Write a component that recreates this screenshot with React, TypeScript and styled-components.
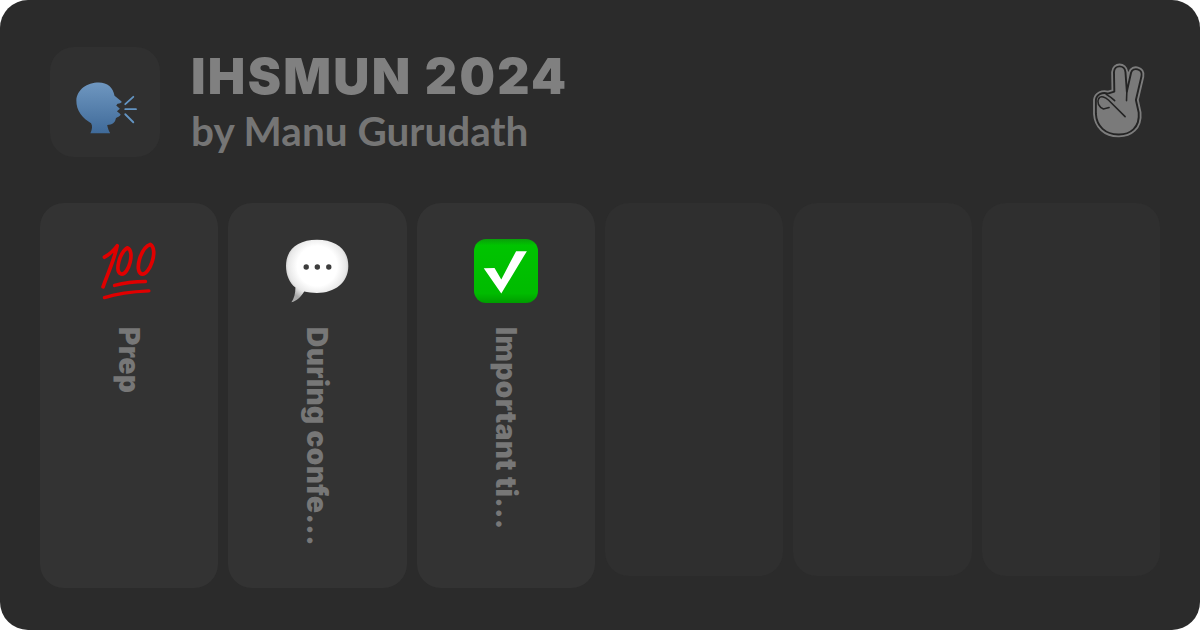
import { ReactNode } from 'react'
import styled, { createGlobalStyle } from 'styled-components'

const GlobalStyle = createGlobalStyle`
  html, body {
    margin: 0;
    padding: 0;
    background: #fff;
  }
`

const SpeakingHead = () => (
  <HeadSvg viewBox="95 115 200 200">
    <defs>
      <linearGradient id="head" x1="0" y1="0" x2="0" y2="1">
        <stop offset="0" stopColor="#6f97c0" />
        <stop offset="1" stopColor="#3f6a99" />
      </linearGradient>
    </defs>
    <path
      d="M150 307 C155 295 157 285 152 277 C128 262 107 240 108 208 C110 176 140 155 175 155 C201 155 218 170 222 195 L243 212 C244 216 238 218 231 219 L227 224 L238 234 L229 241 L240 250 C240 256 231 258 226 262 C224 276 215 281 200 282 C202 291 204 299 209 307 Z"
      fill="url(#head)"
    />
    <g stroke="#6394c2" strokeWidth="5.5" strokeLinecap="round">
      <line x1="254" y1="220" x2="278" y2="198" />
      <line x1="254" y1="235" x2="286" y2="235" />
      <line x1="254" y1="250" x2="278" y2="274" />
    </g>
  </HeadSvg>
)

const handOutline =
  'M135 122 L134 66 C135 44 165 44 167 66 L171 122 L183 68 C188 50 218 56 213 78 L197 146 L205 182 C209 226 180 246 146 245 C110 245 84 222 82 186 L82 146 C84 130 102 122 116 128 Z'

const PeaceHand = () => (
  <PeaceSvg viewBox="68 35 158 228">
    <path d={handOutline} fill="#2b2b2b" stroke="#7d7d7d" strokeWidth="16" strokeLinejoin="round" />
    <path d={handOutline} fill="#7a7a7a" stroke="#242424" strokeWidth="5.5" strokeLinejoin="round" />
    <g fill="none" stroke="#242424" strokeWidth="4.5" strokeLinecap="round">
      <path d="M171 122 L170 148" />
      <path d="M112 130 C122 136 132 144 136 148" />
      <path d="M90 142 C96 132 110 138 118 146 L166 194" />
      <path d="M90 142 C84 152 90 166 104 172 L120 168" />
    </g>
  </PeaceSvg>
)

const Hundred = () => (
  <EmojiSvg viewBox="40 30 190 190">
    <g fill="none" stroke="#e00000" strokeLinecap="round" strokeLinejoin="round">
      <path d="M62 84 C76 76 90 64 100 50 C92 90 72 132 58 172" strokeWidth="11" />
      <path d="M130 56 C106 72 92 128 112 134 C134 138 154 64 130 56 Z" strokeWidth="11" />
      <path d="M198 46 C170 56 150 124 172 134 C196 140 224 60 198 46 Z" strokeWidth="11" />
      <path d="M92 168 C120 160 155 156 184 156" strokeWidth="10" />
      <path d="M62 204 C100 192 150 186 194 184" strokeWidth="10" />
    </g>
  </EmojiSvg>
)

const SpeechBubble = () => (
  <EmojiSvg viewBox="45 28 190 190">
    <defs>
      <radialGradient id="bubble" cx="0.5" cy="0.42" r="0.58">
        <stop offset="0.55" stopColor="#ffffff" />
        <stop offset="0.8" stopColor="#e8e8e8" />
        <stop offset="1" stopColor="#a8a8a8" />
      </radialGradient>
    </defs>
    <path
      d="M140 30 C196 30 233 58 233 108 C233 158 192 188 140 188 C126 188 112 186 102 184 C92 200 80 212 64 216 C72 204 76 190 76 172 C58 158 48 134 48 108 C48 58 84 30 140 30 Z"
      fill="url(#bubble)"
    />
    <circle cx="108" cy="111" r="8" fill="#3d3d3d" />
    <circle cx="141" cy="111" r="8" fill="#3d3d3d" />
    <circle cx="175" cy="111" r="8" fill="#3d3d3d" />
  </EmojiSvg>
)

const CheckBox = () => (
  <EmojiSvg viewBox="43 28 190 190">
    <defs>
      <linearGradient id="check" x1="0" y1="0" x2="0" y2="1">
        <stop offset="0" stopColor="#0a9f0a" />
        <stop offset="0.1" stopColor="#00c400" />
        <stop offset="0.85" stopColor="#00bb00" />
        <stop offset="1" stopColor="#009c00" />
      </linearGradient>
    </defs>
    <rect x="43" y="28" width="190" height="190" rx="36" fill="url(#check)" />
    <polygon points="72,115 104,114 124,148 168,64 200,64 124,190" fill="#fff" />
  </EmojiSvg>
)

type Section = {
  title?: string
  icon?: ReactNode
}

const sections: Section[] = [
  { title: 'Prep', icon: <Hundred /> },
  { title: 'During confe...', icon: <SpeechBubble /> },
  { title: 'Important ti...', icon: <CheckBox /> },
  {},
  {},
  {},
]

const App = () => (
  <>
    <GlobalStyle />
    <Frame>
      <Header>
        <IconTile>
          <SpeakingHead />
        </IconTile>
        <Titles>
          <Title>IHSMUN 2024</Title>
          <Author>by Manu Gurudath</Author>
        </Titles>
        <PeaceHand />
      </Header>
      <Cards>
        {sections.map((section, i) => (
          <Card key={i} $filled={!!section.title}>
            {section.icon}
            {section.title && <CardTitle>{section.title}</CardTitle>}
          </Card>
        ))}
      </Cards>
    </Frame>
  </>
)

export default App

const Frame = styled.div`
  width: 1200px;
  height: 630px;
  box-sizing: border-box;
  padding: 47px 40px 0;
  background: #2b2b2b;
  border-radius: 28px;
  overflow: hidden;
  font-family: 'Inter', 'Liberation Sans', sans-serif;
`

const Header = styled.header`
  display: flex;
  align-items: flex-start;
  height: 110px;
  padding: 0 14px 0 10px;
`

const IconTile = styled.div`
  flex: none;
  display: flex;
  align-items: center;
  justify-content: center;
  width: 110px;
  height: 110px;
  border-radius: 24px;
  background: #303030;
`

const HeadSvg = styled.svg`
  width: 67px;
  height: 67px;
`

const Titles = styled.div`
  flex: 1;
  margin-left: 31px;
`

const Title = styled.h1`
  margin: 0;
  padding-top: 1px;
  font-size: 50px;
  line-height: 56px;
  font-weight: 900;
  letter-spacing: 2.3px;
  color: #808080;
`

const Author = styled.div`
  margin-top: 4px;
  font-family: 'Lato', 'Liberation Sans', sans-serif;
  font-size: 40.5px;
  line-height: 46px;
  font-weight: 700;
  color: #757575;
`

const PeaceSvg = styled.svg`
  flex: none;
  width: 55px;
  height: 80px;
  margin-top: 14px;
`

const Cards = styled.div`
  display: grid;
  grid-template-columns: repeat(6, 1fr);
  column-gap: 10px;
  align-items: start;
  margin-top: 46px;
`

const Card = styled.div<{ $filled: boolean }>`
  display: flex;
  flex-direction: column;
  align-items: center;
  box-sizing: border-box;
  height: ${(p) => (p.$filled ? 385 : 373)}px;
  padding-top: 36px;
  border-radius: 24px;
  background: ${(p) => (p.$filled ? '#333333' : '#2f2f2f')};
`

const EmojiSvg = styled.svg`
  flex: none;
  width: 64px;
  height: 64px;
`

const CardTitle = styled.div`
  margin-top: 24px;
  writing-mode: vertical-rl;
  white-space: nowrap;
  font-size: 28px;
  line-height: 32px;
  font-weight: 900;
  letter-spacing: 0.4px;
  color: #777777;
`
